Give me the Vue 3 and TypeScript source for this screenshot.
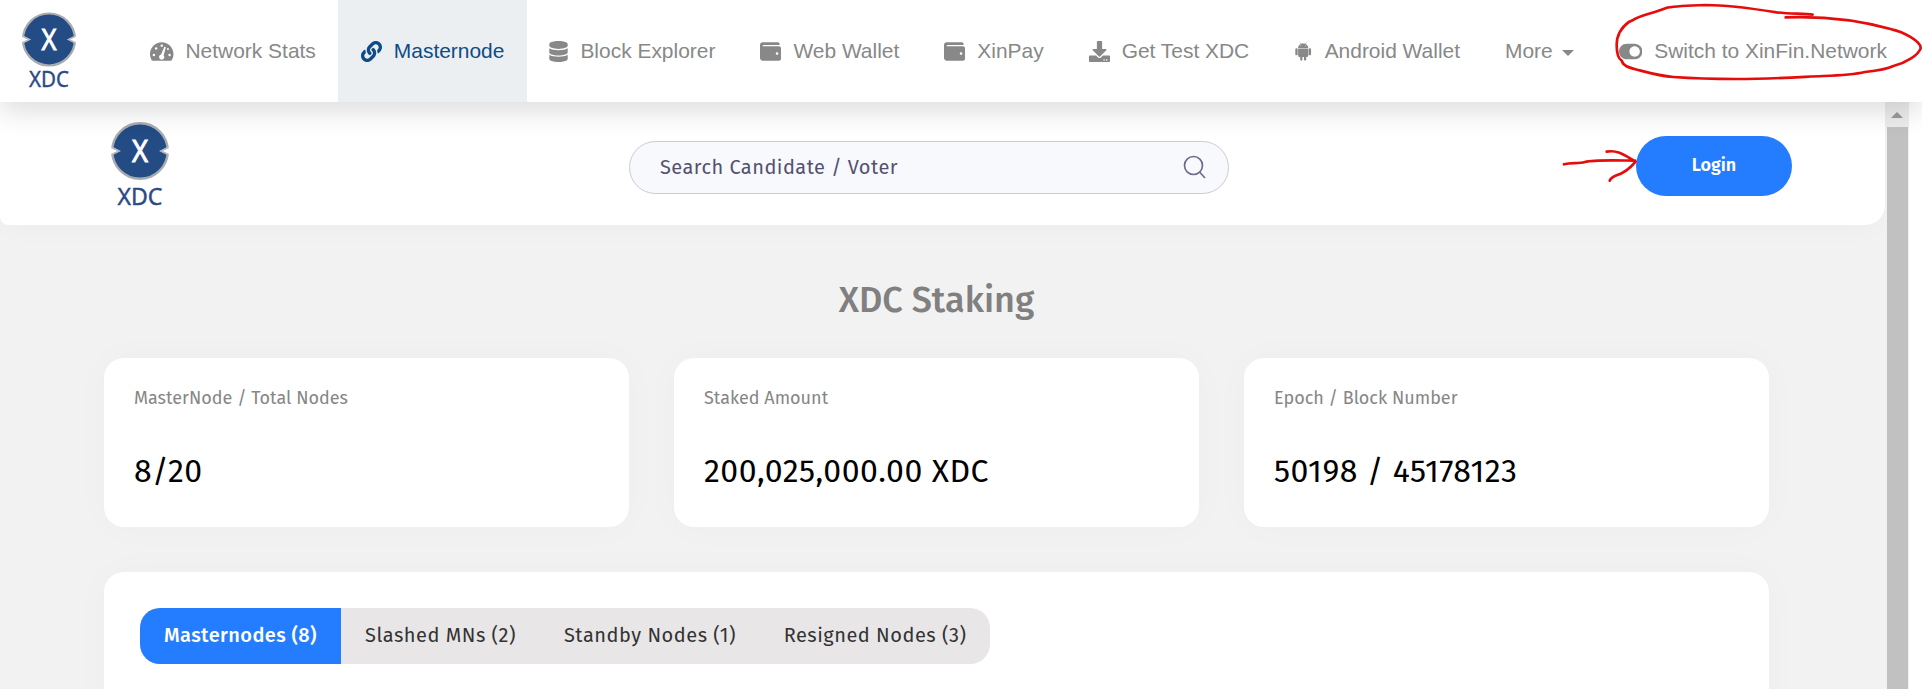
<script setup lang="ts">
interface NavItem {
  label: string
  icon?: string
  active?: boolean
  caret?: boolean
}
interface Icon {
  box: string
  width: number
  path: string
}

const icons: Record<string, Icon> = {
  gauge: {
    box: '0 0 576 512',
    width: 23.5,
    path: 'M288 32C128.94 32 0 160.94 0 320c0 52.8 14.25 102.26 39.06 144.8 5.61 9.62 16.3 15.2 27.44 15.2h443c11.14 0 21.83-5.58 27.44-15.2C561.75 422.26 576 372.8 576 320c0-159.06-128.94-288-288-288z',
  },
  link: {
    box: '0 0 512 512',
    width: 21,
    path: 'M326.612 185.391c59.747 59.809 58.927 155.698.36 214.59-.11.12-.24.25-.36.37l-67.2 67.2c-59.27 59.27-155.699 59.262-214.96 0-59.27-59.26-59.27-155.7 0-214.96l37.106-37.106c9.84-9.84 26.786-3.3 27.294 10.606.648 17.722 3.826 35.527 9.69 52.721 1.986 5.822.567 12.262-3.783 16.612l-13.087 13.087c-28.026 28.026-28.905 73.66-1.155 101.96 28.024 28.579 74.086 28.749 102.325.51l67.2-67.19c28.191-28.191 28.073-73.757 0-101.83-3.701-3.694-7.429-6.564-10.341-8.569a16.037 16.037 0 0 1-6.947-12.606c-.396-10.567 3.348-21.456 11.698-29.806l21.054-21.055c5.521-5.521 14.182-6.199 20.584-1.731a152.482 152.482 0 0 1 20.522 17.197zM467.547 44.449c-59.261-59.262-155.69-59.27-214.96 0l-67.2 67.2c-.12.12-.25.25-.36.37-58.566 58.892-59.387 154.781.36 214.59a152.454 152.454 0 0 0 20.521 17.196c6.402 4.468 15.064 3.789 20.584-1.731l21.054-21.055c8.35-8.35 12.094-19.239 11.698-29.806a16.037 16.037 0 0 0-6.947-12.606c-2.912-2.005-6.64-4.875-10.341-8.569-28.073-28.073-28.191-73.639 0-101.83l67.2-67.19c28.239-28.239 74.3-28.069 102.325.51 27.75 28.3 26.872 73.934-1.155 101.96l-13.087 13.087c-4.35 4.35-5.769 10.79-3.783 16.612 5.864 17.194 9.042 34.999 9.69 52.721.509 13.906 17.454 20.446 27.294 10.606l37.106-37.106c59.271-59.259 59.271-155.699.001-214.959z',
  },
  database: {
    box: '0 0 448 512',
    width: 19,
    path: 'M448 73.143v45.714C448 159.143 347.667 192 224 192S0 159.143 0 118.857V73.143C0 32.857 100.333 0 224 0s224 32.857 224 73.143zM448 176v102.857C448 319.143 347.667 352 224 352S0 319.143 0 278.857V176c48.125 33.143 136.208 48.572 224 48.572S399.874 209.143 448 176zm0 160v102.857C448 479.143 347.667 512 224 512S0 479.143 0 438.857V336c48.125 33.143 136.208 48.572 224 48.572S399.874 369.143 448 336z',
  },
  wallet: {
    box: '0 0 512 512',
    width: 21,
    path: 'M461.2 128H80c-8.84 0-16-7.16-16-16s7.16-16 16-16h384c8.84 0 16-7.16 16-16 0-26.51-21.49-48-48-48H64C28.65 32 0 60.65 0 96v320c0 35.35 28.65 64 64 64h397.2c28.02 0 50.8-21.53 50.8-48V176c0-26.47-22.78-48-50.8-48zM416 336c-17.67 0-32-14.33-32-32s14.33-32 32-32 32 14.33 32 32-14.33 32-32 32z',
  },
  download: {
    box: '0 0 512 512',
    width: 21,
    path: 'M216 0h80c13.3 0 24 10.7 24 24v168h87.7c17.8 0 26.7 21.5 14.1 34.1L269.7 378.3c-7.5 7.5-19.8 7.5-27.3 0L90.1 226.1c-12.6-12.6-3.7-34.1 14.1-34.1H192V24c0-13.3 10.7-24 24-24zm296 376v112c0 13.3-10.7 24-24 24H24c-13.3 0-24-10.7-24-24V376c0-13.3 10.7-24 24-24h146.7l49 49c20.1 20.1 52.5 20.1 72.6 0l49-49H488c13.3 0 24 10.7 24 24zm-124 88c0-11-9-20-20-20s-20 9-20 20 9 20 20 20 20-9 20-20zm64 0c0-11-9-20-20-20s-20 9-20 20 9 20 20 20 20-9 20-20z',
  },
  android: {
    box: '0 0 448 512',
    width: 18.4,
    path: 'M89.6 204.5v115.8c0 15.4-12.1 27.7-27.5 27.7-15.3 0-30.1-12.4-30.1-27.7V204.5c0-15.1 14.8-27.5 30.1-27.5 15.1 0 27.5 12.4 27.5 27.5zm10.8 157c0 16.4 13.2 29.6 29.6 29.6h19.9l.3 61.1c0 36.9 55.2 36.6 55.2 0v-61.1h37.2v61.1c0 36.7 55.5 36.8 55.5 0v-61.1h20.2c16.2 0 29.4-13.2 29.4-29.6V182.1H100.4v179.4zm248-189.1H99.3c0-42.8 25.6-80 63.6-99.4l-19.1-35.3c-2.8-4.9 4.3-8 6.7-3.8l19.4 35.6c34.9-15.5 75-14.7 108.3 0L297.5 34c2.5-4.3 9.5-1.1 6.7 3.8L285.1 73c37.7 19.4 63.3 56.6 63.3 99.4zm-170.7-55.5c0-5.7-4.6-10.5-10.5-10.5-5.7 0-10.2 4.8-10.2 10.5s4.6 10.5 10.2 10.5c5.9 0 10.5-4.8 10.5-10.5zm113.4 0c0-5.7-4.6-10.5-10.2-10.5-5.9 0-10.5 4.8-10.5 10.5s4.6 10.5 10.5 10.5c5.6 0 10.2-4.8 10.2-10.5zm94.8 60.1c-15.1 0-27.5 12.1-27.5 27.5v115.8c0 15.4 12.4 27.7 27.5 27.7 15.4 0 30.1-12.4 30.1-27.7V204.5c0-15.4-14.8-27.5-30.1-27.5z',
  },
  toggle: {
    box: '0 0 576 512',
    width: 23.5,
    path: 'M384 64H192C86 64 0 150 0 256s86 192 192 192h192c106 0 192-86 192-192S490 64 384 64zm0 320c-70.8 0-128-57.3-128-128 0-70.8 57.3-128 128-128 70.8 0 128 57.3 128 128 0 70.8-57.3 128-128 128z',
  },
}

const nav: NavItem[] = [
  { label: 'Network Stats', icon: 'gauge' },
  { label: 'Masternode', icon: 'link', active: true },
  { label: 'Block Explorer', icon: 'database' },
  { label: 'Web Wallet', icon: 'wallet' },
  { label: 'XinPay', icon: 'wallet' },
  { label: 'Get Test XDC', icon: 'download' },
  { label: 'Android Wallet', icon: 'android' },
  { label: 'More', caret: true },
  { label: 'Switch to XinFin.Network', icon: 'toggle' },
]

const stats = [
  { label: 'MasterNode / Total Nodes', value: '8/20' },
  { label: 'Staked Amount', value: '200,025,000.00 XDC' },
  { label: 'Epoch / Block Number', value: '50198 / 45178123' },
]

const tabs = ['Masternodes (8)', 'Slashed MNs (2)', 'Standby Nodes (1)', 'Resigned Nodes (3)']
</script>

<template>
  <div class="page">
    <nav class="topbar">
      <svg class="logo" viewBox="0 0 58 90" width="58" height="90">
        <circle cx="29" cy="28.500" r="26" fill="#234b84" stroke="#a9abb0" stroke-width="2.200" />
        <path d="M0 25 9 28.500 0 32zM58 25 49 28.500 58 32z" fill="#fff" />
        <path d="M2.500 25 9.500 28.500l-7 3.500M55.500 25 48.500 28.500l7 3.500" fill="none" stroke="#b9bbc0" stroke-width="1.500" />
        <text class="logo-x" x="29" y="39" textLength="15" lengthAdjust="spacingAndGlyphs">X</text>
        <text class="logo-name" x="29" y="76" textLength="40" lengthAdjust="spacingAndGlyphs">XDC</text>
      </svg>
      <a
        v-for="item in nav"
        :key="item.label"
        class="nav-item"
        :class="{ active: item.active, dropdown: item.caret }"
      >
        <svg
          v-if="item.icon"
          :viewBox="icons[item.icon].box"
          :width="icons[item.icon].width"
          height="21"
          fill="currentColor"
        >
          <path :d="icons[item.icon].path" />
          <g v-if="item.icon === 'gauge'" fill="#fff">
            <circle cx="288" cy="112" r="30" />
            <circle cx="150" cy="180" r="30" />
            <circle cx="440" cy="195" r="24" />
            <circle cx="96" cy="340" r="30" />
            <circle cx="480" cy="340" r="30" />
            <path d="M352 140 390 152 334 350a64 64 0 1 1-62-20z" />
          </g>
        </svg>
        <span>{{ item.label }}</span>
        <i v-if="item.caret" class="caret"></i>
      </a>
    </nav>

    <div class="viewport">
      <div class="content">
        <header class="header">
          <svg class="brand" viewBox="0 0 58 90" width="62" height="96.200">
            <circle cx="29" cy="29" r="26" fill="#234b84" stroke="#a9abb0" stroke-width="2.200" />
            <path d="M0 25.500 9 29 0 32.500zM58 25.500 49 29 58 32.500z" fill="#fff" />
            <path d="M2.500 25.500 9.500 29l-7 3.500M55.500 25.500 48.500 29l7 3.500" fill="none" stroke="#b9bbc0" stroke-width="1.500" />
            <text class="logo-x" x="29" y="39" textLength="15" lengthAdjust="spacingAndGlyphs">X</text>
            <text class="logo-name" x="29" y="79.500" textLength="42" lengthAdjust="spacingAndGlyphs">XDC</text>
          </svg>
          <div class="search">
            <span>Search Candidate / Voter</span>
            <svg viewBox="0 0 24 26" width="24" height="26" fill="none" stroke="#6d6d88" stroke-width="1.700">
              <circle cx="10.500" cy="11.500" r="9" />
              <path d="m16.500 18 5.500 6" />
            </svg>
          </div>
          <button class="login">Login</button>
        </header>

        <main class="main">
          <h1>XDC Staking</h1>
          <section class="stats">
            <article v-for="s in stats" :key="s.label" class="card">
              <p class="label">{{ s.label }}</p>
              <p class="value">{{ s.value }}</p>
            </article>
          </section>
          <section class="panel">
            <div class="tabs">
              <button v-for="(t, i) in tabs" :key="t" class="tab" :class="{ on: i === 0 }">{{ t }}</button>
            </div>
          </section>
        </main>
      </div>
      <div class="scrollbar">
        <div class="scroll-up"><i></i></div>
        <div class="thumb"></div>
      </div>
    </div>

    <svg class="markup" viewBox="0 0 1296 720" width="432" height="240">
      <path d="M968 44C940 40 900 42 860 37 790 26 720 15 648 15 600 17 550 18 528 24 490 40 450 45 431 59L418 65C390 85 380 110 380 135 380 160 385 176 395 182 400 200 420 203 445 210 490 222 510 228 550 231 620 236 680 237 740 237 850 237 930 231 1000 228 1060 226 1100 222 1125 216 1170 211 1190 208 1210 198 1250 188 1285 165 1292 145 1294 125 1240 95 1205 88 1100 58 1000 48 887 52" />
      <path d="M222 493C245 487 265 492 285 486 310 479 360 481 435 482M350 455C385 448 410 470 437 485 420 505 400 520 380 526 370 530 362 535 359 542" />
    </svg>
  </div>
</template>

<style>
html,
body {
  margin: 0;
  overflow: hidden;
}
</style>

<style scoped>
* {
  box-sizing: border-box;
}
.page {
  position: relative;
  width: 1922px;
  height: 689px;
  overflow: hidden;
  display: flex;
  flex-direction: column;
  background: #fff;
  font-family: "Fira Sans", "Noto Sans", sans-serif;
}
.topbar {
  position: relative;
  z-index: 2;
  flex: none;
  height: 102px;
  display: flex;
  align-items: stretch;
  background: #fff;
  box-shadow: 0 10px 25px rgba(0, 0, 0, 0.13);
}
.logo {
  flex: none;
  margin: 11px 50px 0 19.500px;
}
.logo-x,
.logo-name {
  font-family: "Noto Sans", sans-serif;
  text-anchor: middle;
}
.logo-x {
  font-size: 29px;
  fill: #fff;
  stroke: #fff;
  stroke-width: 0.9px;
}
.logo-name {
  font-size: 22.500px;
  fill: #2b4a86;
  stroke: #2b4a86;
  stroke-width: 0.4px;
}
.nav-item {
  flex: none;
  display: flex;
  align-items: center;
  gap: 12px;
  padding: 0 22.500px;
  font-family: "Liberation Sans", Arial, sans-serif;
  font-size: 20.950px;
  color: #888;
  white-space: nowrap;
}
.nav-item.active {
  background: #ebeff2;
  color: #0d4c86;
}
.nav-item.dropdown {
  gap: 9px;
}
.caret {
  border: 6px solid transparent;
  border-top-color: currentColor;
  border-bottom: 0;
  margin-top: 4px;
}
.viewport {
  flex: 1;
  display: flex;
  min-height: 0;
}
.content {
  width: 1885px;
  background: #f2f2f2;
  overflow: hidden;
}
.header {
  height: 123px;
  display: flex;
  align-items: flex-start;
  background: #fff;
  border-radius: 0 0 20px 8px;
  box-shadow: 0 0 30px rgba(0, 0, 0, 0.03);
}
.brand {
  margin: 18px 0 0 109px;
}
.search {
  width: 600px;
  height: 53px;
  margin: 39px 0 0 458px;
  padding: 0 21px 1px 30px;
  display: flex;
  align-items: center;
  justify-content: space-between;
  border: 1px solid #ccc;
  border-radius: 27px;
  background: #f8f9fc;
  color: #53516f;
  font-size: 20px;
  letter-spacing: 0.46px;
}
.login {
  width: 156px;
  height: 60px;
  margin: 34px 0 0 407px;
  padding: 0 0 3px;
  border: 0;
  border-radius: 30px;
  background: #247cff;
  color: #fff;
  font: 600 18px "Fira Sans", "Noto Sans", sans-serif;
}
.main {
  width: 1665px;
  margin: 0 auto 0 104px;
}
h1 {
  margin: 0;
  height: 133px;
  padding-top: 50px;
  text-align: center;
  font-size: 36px;
  line-height: 50px;
  font-weight: 500;
  color: #808080;
}
.stats {
  display: grid;
  grid-template-columns: repeat(3, 525px);
  gap: 45px;
}
.card {
  height: 169px;
  padding: 28px 30px;
  border-radius: 20px;
  background: #fff;
  box-shadow: 0 0 40px rgba(0, 0, 0, 0.025);
}
.card p {
  margin: 0;
  white-space: nowrap;
}
.label {
  font-size: 18px;
  line-height: 24px;
  color: #868686;
}
.value {
  padding-top: 39px;
  font-size: 32px;
  line-height: 44px;
  letter-spacing: 0.48px;
  color: #000;
}
.panel {
  margin-top: 45px;
  height: 200px;
  padding: 36px;
  border-radius: 20px;
  background: #fff;
  box-shadow: 0 0 40px rgba(0, 0, 0, 0.025);
}
.tabs {
  width: 850px;
  height: 56px;
  display: grid;
  grid-template-columns: 201px 199px 220px 230px;
  overflow: hidden;
  border-radius: 20px;
  background: #e8e6e7;
}
.tab {
  padding: 0 0 2px;
  border: 0;
  background: none;
  color: #333;
  font: 400 20px "Fira Sans", "Noto Sans", sans-serif;
  letter-spacing: 0.5px;
  white-space: nowrap;
}
.tab.on {
  background: #247cff;
  color: #fff;
  font-weight: 500;
  letter-spacing: 0.4px;
}
.scrollbar {
  width: 24px;
  display: flex;
  flex-direction: column;
  align-items: center;
  background: #f1f1f1;
}
.scroll-up {
  width: 24px;
  height: 25px;
  display: flex;
  align-items: center;
  justify-content: center;
  background: #ececec;
}
.scroll-up i {
  border: 6px solid transparent;
  border-bottom-color: #999;
  border-top: 0;
}
.thumb {
  flex: 1;
  width: 21px;
  background: #c1c1c1;
}
.markup {
  position: absolute;
  z-index: 3;
  left: 1490px;
  top: 0;
  fill: none;
  stroke: #e60c0c;
  stroke-width: 8;
  stroke-linecap: round;
  stroke-linejoin: round;
}
</style>
